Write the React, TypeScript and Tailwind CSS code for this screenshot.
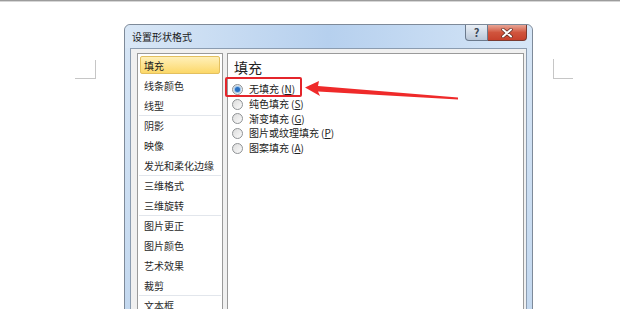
import React from "react";

const NAV: { label: string; sep?: boolean }[] = [
  { label: "填充" },
  { label: "线条颜色" },
  { label: "线型", sep: true },
  { label: "阴影" },
  { label: "映像" },
  { label: "发光和柔化边缘", sep: true },
  { label: "三维格式" },
  { label: "三维旋转", sep: true },
  { label: "图片更正" },
  { label: "图片颜色" },
  { label: "艺术效果" },
  { label: "裁剪", sep: true },
  { label: "文本框" },
];

const FILLS = [
  { label: "无填充", key: "N", checked: true },
  { label: "纯色填充", key: "S" },
  { label: "渐变填充", key: "G" },
  { label: "图片或纹理填充", key: "P" },
  { label: "图案填充", key: "A" },
];

function Radio({ checked }: { checked?: boolean }) {
  return (
    <span className="flex h-[11px] w-[11px] shrink-0 items-center justify-center rounded-full border border-[#8f9295] bg-gradient-to-br from-[#dcdcdc] to-[#fbfbfb]">
      {checked && (
        <span className="h-[5px] w-[5px] rounded-full bg-[#2a6fc0] shadow-[0_0_1px_1px_#8fc0ee]" />
      )}
    </span>
  );
}

export default function App() {
  return (
    <div className="relative h-[309px] w-[620px] overflow-hidden bg-white font-['Noto_Sans_CJK_SC','Noto_Sans',sans-serif] text-[#1c1c1c]">
      {/* top edge of the document area */}
      <div className="h-[2px] border-t border-[#9c9c9c] bg-[#d6d6d6]" />

      {/* page corner marks */}
      <div className="absolute left-[75px] top-[60px] h-[19px] w-[21px] border-b border-r border-[#c6c6c6]" />
      <div className="absolute left-[553px] top-[59px] h-[20px] w-[20px] border-b border-l border-[#c6c6c6]" />

      {/* dialog */}
      <div className="ml-[124px] mt-[22px] w-[409px] rounded-t-[6px] border border-[#7e8a99] bg-gradient-to-b from-[#d7e6f6] to-[#c3d8ef] px-[5px]">
        <div className="flex h-[23px] items-start bg-gradient-to-r from-[#d9e7f6] via-[#b6d0ee] to-[#d6e6f7] -mx-[5px] rounded-t-[6px] pl-[7px] pr-[5px]">
          <span className="self-center text-[10px] leading-none tracking-[0px] text-[#1a1a1a]">设置形状格式</span>
          <div className="ml-auto flex h-[16px]">
            <div className="flex w-[23px] items-center justify-center rounded-bl-[4px] border border-t-0 border-[#6b7a8d] bg-gradient-to-b from-[#e9eff6] to-[#b9c7d8] text-[11px] font-bold leading-none text-[#3a4656]">
              ?
            </div>
            <div className="flex w-[39px] items-center justify-center rounded-br-[4px] border border-l-0 border-t-0 border-[#7a3a30] bg-gradient-to-b from-[#e7a596] via-[#d0543d] to-[#c7412c]">
              <svg width="12" height="10" viewBox="0 0 12 10">
                <path d="M2 1.5 L10 8.5 M10 1.5 L2 8.5" stroke="#5b2a22" strokeWidth="3.4" strokeLinecap="round" />
                <path d="M2 1.5 L10 8.5 M10 1.5 L2 8.5" stroke="#ffffff" strokeWidth="2" strokeLinecap="round" />
              </svg>
            </div>
          </div>
        </div>

        {/* client area */}
        <div className="flex h-[270px] gap-[4px] border border-[#8b9cb0] bg-[#f0f0f0] pl-[6px] pr-[3px] pt-[4px]">
          <div className="w-[86px] shrink-0 border border-[#9a9a9a] bg-white px-[1px] pt-[1px]">
            {NAV.map((item, i) => (
              <div key={item.label} className={`h-[20px] ${item.sep ? "border-b border-[#e2e6ec]" : ""}`}>
                {i === 0 ? (
                  <div className="mx-[1px] my-[1px] flex h-[18px] items-center rounded-[2px] border border-[#e3c060] bg-gradient-to-b from-[#fff0b8] to-[#fcd867] pl-[3px] text-[10px]">
                    {item.label}
                  </div>
                ) : (
                  <div className="flex h-[19px] items-center pl-[5px] text-[10px] text-[#2a2a2a]">{item.label}</div>
                )}
              </div>
            ))}
          </div>

          <div className="w-[297px] shrink-0 border border-[#9a9a9a] bg-white pt-[4px]">
            <div className="pl-[6px] text-[14px] leading-[18px] text-[#222]">填充</div>
            <div className="mt-[6px] pl-[4px]">
              {FILLS.map((f) => (
                <div key={f.key} className="flex h-[14.7px] items-center gap-[6px] text-[10px] leading-none">
                  <Radio checked={f.checked} />
                  <span>
                    {f.label}
                    <span className="ml-[2px]">
                      (<span className="underline">{f.key}</span>)
                    </span>
                  </span>
                </div>
              ))}
            </div>
          </div>
        </div>
      </div>

      {/* annotation */}
      <div className="absolute left-[225px] top-[77px] h-[20px] w-[77px] rounded-[2px] border-2 border-[#e4252b]" />
      <svg className="absolute left-0 top-0" width="620" height="309" viewBox="0 0 620 309">
        <polygon
          points="305,87.5 319,81 318,86 458,97.6 458,99.4 318,91.5 320,96"
          fill="#ef2a2a"
        />
      </svg>
    </div>
  );
}
